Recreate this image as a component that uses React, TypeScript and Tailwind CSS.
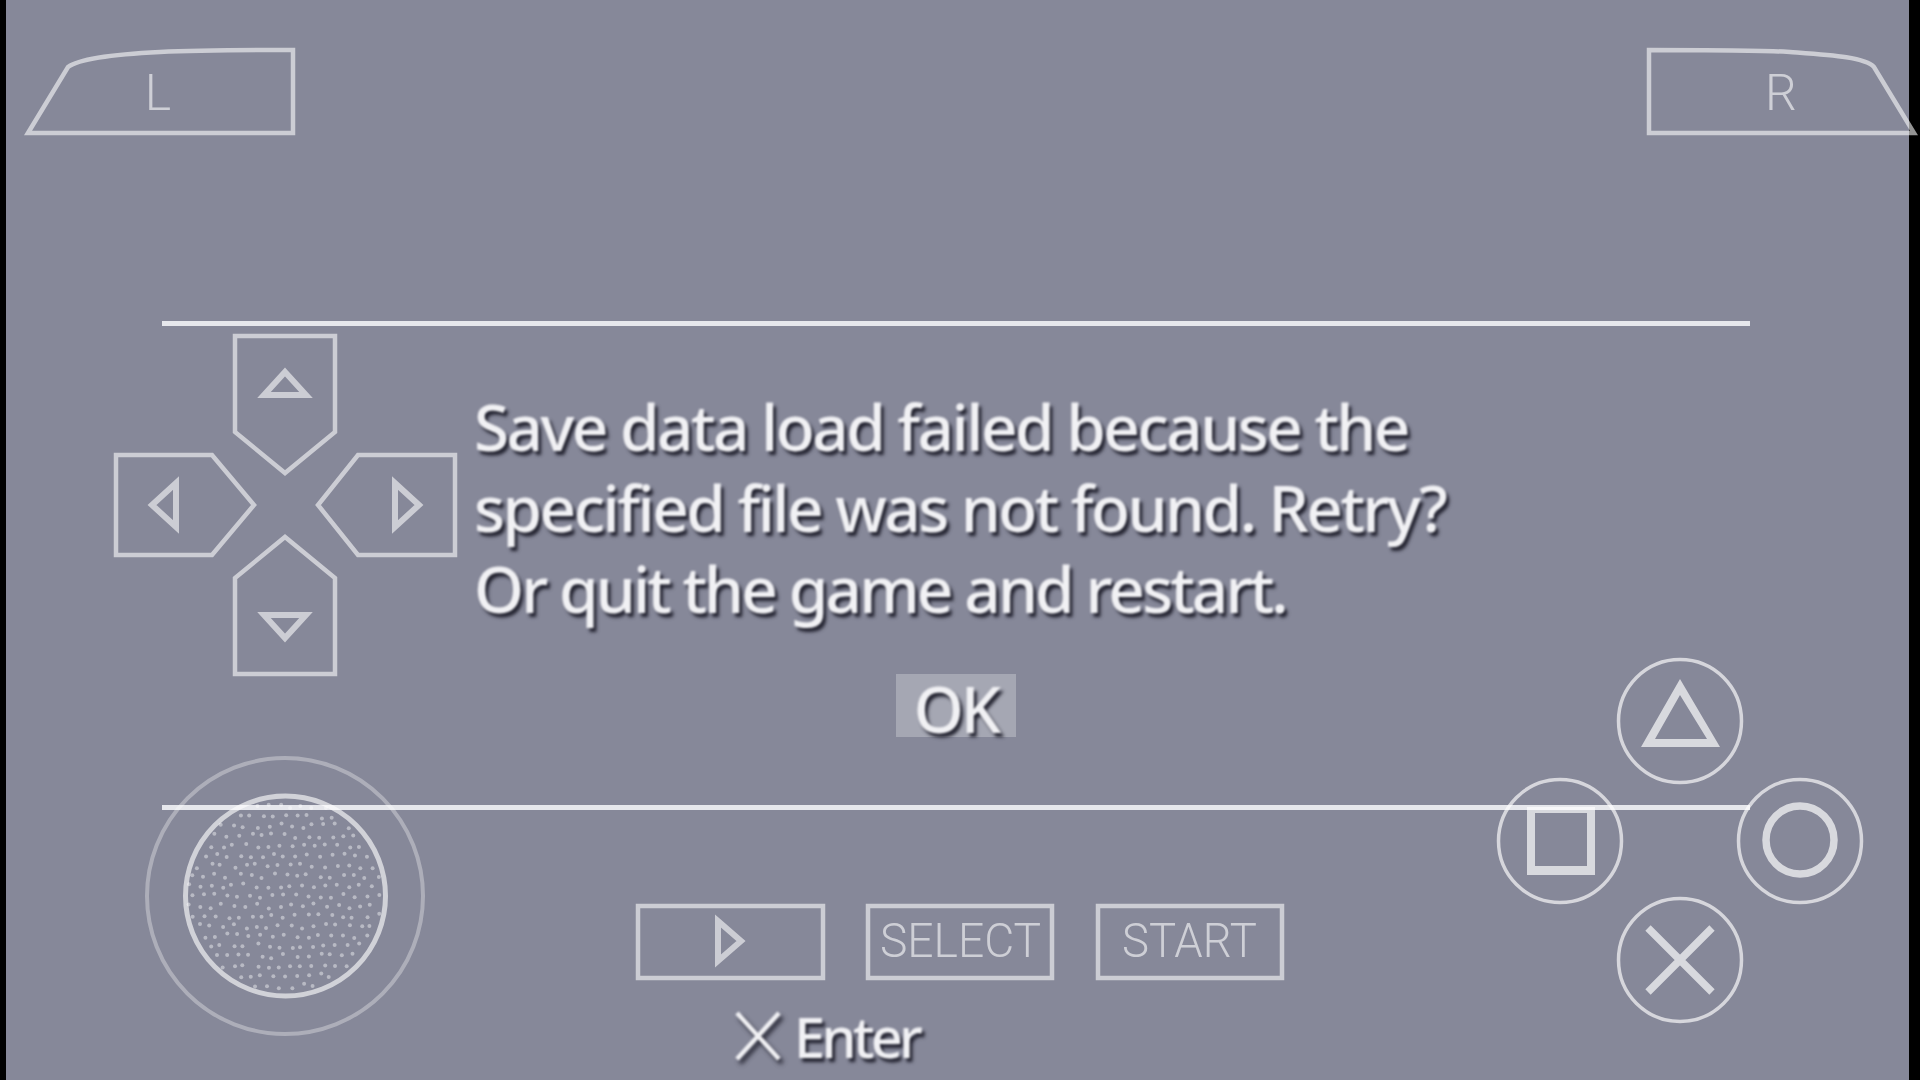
const textShadow = "[text-shadow:3px_4px_3px_rgba(30,30,42,0.95)]";
const labelFont = '"Roboto", "Liberation Sans", sans-serif';

// jittered hex grid clipped to the stick cap
function stickDots() {
  const dots: { x: number; y: number }[] = [];
  let seed = 7;
  const rand = () => {
    seed = (seed * 16807) % 2147483647;
    return seed / 2147483647 - 0.5;
  };
  const step = 11.5;
  for (let row = -11; row <= 11; row++) {
    for (let col = -11; col <= 11; col++) {
      const x = 285 + col * step + (row % 2 ? step / 2 : 0) + rand() * 5;
      const y = 896 + row * step * 0.87 + rand() * 5;
      if (Math.hypot(x - 285, y - 896) < 97) dots.push({ x, y });
    }
  }
  return dots;
}

const dots = stickDots();

function DPad() {
  return (
    <g fill="none" stroke="white" strokeWidth="4.5" strokeOpacity="0.58">
      <path d="M235 336H335V432L285 473L235 432Z" />
      <path d="M235 674H335V578L285 537L235 578Z" />
      <path d="M116 455H212L254 505L212 555H116Z" />
      <path d="M455 455H358L318 505L358 555H455Z" />
      <path d="M285 372L306 395H264Z" strokeWidth="6" />
      <path d="M285 638L306 615H264Z" strokeWidth="6" />
      <path d="M152 505L176 483V527Z" strokeWidth="6" />
      <path d="M419 505L395 483V527Z" strokeWidth="6" />
    </g>
  );
}

function Shoulders() {
  return (
    <g fill="none" stroke="white" strokeWidth="4.5" strokeOpacity="0.58">
      <path d="M28 133L68 67C80 58 120 54 160 52C200 50 260 50 293 50V133Z" />
      <path d="M1649 50C1700 50 1760 50 1790 52C1830 55 1865 57 1874 67L1914 133H1649Z" />
      <text x="158" y="110" fill="white" fillOpacity="0.6" stroke="none" fontSize="50" fontWeight="300" textAnchor="middle" fontFamily={labelFont}>L</text>
      <text x="1781" y="110" fill="white" fillOpacity="0.6" stroke="none" fontSize="50" fontWeight="300" textAnchor="middle" fontFamily={labelFont}>R</text>
    </g>
  );
}

function Stick() {
  return (
    <g>
      <circle cx="285" cy="896" r="138" fill="none" stroke="white" strokeOpacity="0.32" strokeWidth="4" />
      <circle cx="285.5" cy="896" r="100" fill="none" stroke="white" strokeOpacity="0.62" strokeWidth="5" />
      {dots.map((d, i) => (
        <circle key={i} cx={d.x} cy={d.y} r="2" fill="white" fillOpacity="0.42" />
      ))}
    </g>
  );
}

function SystemButtons() {
  return (
    <g fill="none" stroke="white" strokeWidth="4.5" strokeOpacity="0.58">
      <rect x="638" y="906" width="185" height="72" />
      <rect x="868" y="906" width="184" height="72" />
      <rect x="1098" y="906" width="184" height="72" />
      <path d="M718 921L741 941L718 961Z" strokeWidth="6" />
      <text x="880" y="957" fill="white" fillOpacity="0.6" stroke="none" fontSize="48" fontWeight="300" textLength="161" lengthAdjust="spacingAndGlyphs" fontFamily={labelFont}>SELECT</text>
      <text x="1122" y="957" fill="white" fillOpacity="0.6" stroke="none" fontSize="48" fontWeight="300" textLength="135" lengthAdjust="spacingAndGlyphs" fontFamily={labelFont}>START</text>
    </g>
  );
}

function FaceButtons() {
  return (
    <g>
      <g fill="none" stroke="white" strokeOpacity="0.66" strokeWidth="3.5">
        <circle cx="1680" cy="721" r="61.5" />
        <circle cx="1560" cy="841" r="61.5" />
        <circle cx="1800" cy="841" r="61.5" />
        <circle cx="1680" cy="960" r="61.5" />
      </g>
      <g fill="white" fillOpacity="0.68" fillRule="evenodd">
        <path d="M1680 679L1720 747H1641ZM1680 695L1655 739H1707Z" />
        <path d="M1527 807H1595V875H1527ZM1535 813V866H1587V813Z" />
      </g>
      <circle cx="1800" cy="840" r="34" fill="none" stroke="white" strokeOpacity="0.68" strokeWidth="7.5" />
      <path d="M1648 928L1712 992M1712 928L1648 992" fill="none" stroke="white" strokeOpacity="0.68" strokeWidth="7.5" />
    </g>
  );
}

function TouchControls() {
  return (
    <svg viewBox="0 0 1920 1080" className="absolute inset-0 w-[1920px] h-[1080px] pointer-events-none blur-[0.7px]">
      <Shoulders />
      <DPad />
      <Stick />
      <SystemButtons />
      <FaceButtons />
    </svg>
  );
}

function SaveDialog() {
  return (
    <div className="flex flex-col pt-[321px] pl-[156px] pr-[159px]">
      <div className="h-[5px] bg-[#e6e7ec] blur-[0.5px]" />
      <p className={`mt-[60px] ml-[312px] text-[64px] font-medium tracking-[-2.6px] leading-[81px] text-[#f1f1f4] whitespace-nowrap blur-[0.8px] ${textShadow}`}>
        Save data load failed because the
        <br />
        specified file was not found. Retry?
        <br />
        <span className="tracking-[-2.95px]">Or quit the game and restart.</span>
      </p>
      <div className="mt-[45px] flex justify-center">
        <div className={`w-[120px] h-[63px] bg-[#a5a7b3] flex items-center justify-center text-[64px] font-medium tracking-[-3px] leading-none text-[#f1f1f4] ${textShadow}`}>
          <span className="mt-[6px] blur-[0.8px]">OK</span>
        </div>
      </div>
      <div className="mt-[68px] h-[5px] bg-[#e6e7ec] blur-[0.5px]" />
      <div className="mt-[198px] ml-[573px] flex items-center gap-[13px] blur-[0.8px]">
        <svg width="46" height="52" viewBox="0 0 46 52" className="drop-shadow-[3px_4px_2px_rgba(30,30,42,0.95)]">
          <path d="M2 3L44 49M44 3L2 49" stroke="#f1f1f4" strokeWidth="4.5" fill="none" />
        </svg>
        <span className={`text-[56px] font-medium tracking-[-3.7px] leading-none text-[#f1f1f4] ${textShadow}`}>Enter</span>
      </div>
    </div>
  );
}

export default function App() {
  return (
    <div className="relative w-[1920px] h-[1080px] overflow-hidden flex bg-black font-['Noto_Sans',sans-serif]">
      <div className="w-[6px] shrink-0" />
      <div className="w-[1903px] h-full bg-[#868899] overflow-hidden">
        <SaveDialog />
      </div>
      <TouchControls />
    </div>
  );
}
